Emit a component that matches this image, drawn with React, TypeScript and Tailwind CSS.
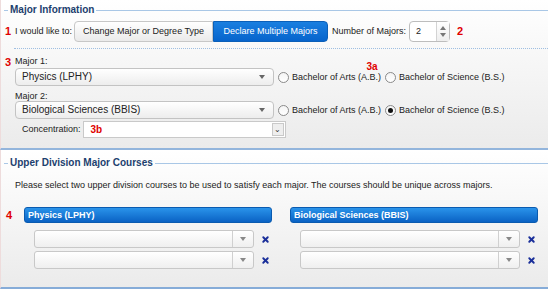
import { X } from "lucide-react";

const red = "text-[#e00000] font-bold text-[11px] leading-none";

function Legend({ title }: { title: string }) {
  return (
    <div className="flex items-center h-[14px]">
      <div className="ml-[3px] w-[4px] h-px bg-[#a9c7e6]" />
      <span className="px-[2px] font-bold text-[10px] text-[#1c3f6e] leading-none">{title}</span>
      <div className="flex-1 h-px bg-[#a9c7e6]" />
    </div>
  );
}

function Caret({ color = "border-t-[#666]" }: { color?: string }) {
  return <span className={`w-0 h-0 border-l-[3px] border-r-[3px] border-t-[4px] border-l-transparent border-r-transparent ${color}`} />;
}

function Select({ value, width }: { value: string; width: string }) {
  return (
    <div className={`${width} h-[18px] rounded-[4px] border border-[#c3c3c3] bg-gradient-to-b from-white to-[#ededed] flex items-center pl-[6px] pr-[8px]`}>
      <span className="flex-1 text-[10px] text-[#222]">{value}</span>
      <Caret />
    </div>
  );
}

function Radio({ label, checked }: { label: string; checked?: boolean }) {
  return (
    <div className="flex items-center">
      <span className="w-[11px] h-[11px] rounded-full border border-[#8a8a8a] bg-gradient-to-b from-[#f4f4f4] to-white flex items-center justify-center">
        {checked && <span className="w-[5px] h-[5px] rounded-full bg-[#111]" />}
      </span>
      <span className="ml-[3px]">{label}</span>
    </div>
  );
}

function Combo() {
  return (
    <div className="flex items-center">
      <div className="w-[220px] h-[18px] rounded-[3px] border border-[#c8c8c8] bg-gradient-to-b from-white to-[#efefef] flex">
        <div className="flex-1" />
        <div className="w-[21px] border-l border-[#d0d0d0] flex items-center justify-center">
          <Caret color="border-t-[#888]" />
        </div>
      </div>
      <X className="ml-[7px] w-[9px] h-[9px] text-[#1a2f9a]" strokeWidth={5} />
    </div>
  );
}

function Column({ title }: { title: string }) {
  return (
    <div className="w-[248px]">
      <div className="h-[16px] rounded-[3px] border border-[#0a5bb0] bg-gradient-to-b from-[#2a93ea] to-[#0a62c4] text-white font-bold text-[9px] flex items-center pl-[3px]">
        {title}
      </div>
      <div className="ml-[10px] mt-[7px] flex flex-col gap-[3px]">
        <Combo />
        <Combo />
      </div>
    </div>
  );
}

export default function App() {
  return (
    <div className="w-[548px] h-[289px] overflow-hidden bg-white font-['Liberation_Sans',Arial,sans-serif] text-[9px] text-[#222] leading-none">
      {/* Major Information */}
      <section className="h-[150px] pt-[3px] border-b-2 border-[#93b5dc] border-l border-l-[#eedcdc] bg-gradient-to-b from-white to-[#ebebeb]">
        <Legend title="Major Information" />
        <div className="mt-[4px] flex items-center h-[21px]">
          <span className={`w-[14px] pl-[4px] ${red}`}>1</span>
          <span>I would like to:</span>
          <div className="ml-[2px] flex">
            <button className="w-[139px] h-[21px] rounded-l-[4px] border border-[#c7c7c7] bg-gradient-to-b from-white to-[#eaeaea] text-[9px] text-[#222]">
              Change Major or Degree Type
            </button>
            <button className="w-[115px] h-[21px] rounded-r-[4px] border border-[#0b5fb8] bg-gradient-to-b from-[#1a7fe0] to-[#0664cc] text-[9px] text-white">
              Declare Multiple Majors
            </button>
          </div>
          <span className="ml-[4px]">Number of Majors:</span>
          <div className="ml-[3px] w-[41px] h-[21px] rounded-[4px] border border-[#bdbdbd] bg-white flex">
            <span className="flex-1 pl-[6px] flex items-center text-[9px]">2</span>
            <div className="w-[13px] border-l border-[#d3d3d3] bg-gradient-to-b from-white to-[#eee] flex flex-col items-center justify-around py-[2px]">
              <span className="w-0 h-0 border-l-[3px] border-r-[3px] border-b-[4px] border-l-transparent border-r-transparent border-b-[#777]" />
              <span className="w-0 h-0 border-l-[3px] border-r-[3px] border-t-[4px] border-l-transparent border-r-transparent border-t-[#777]" />
            </div>
          </div>
          <span className={`ml-[7px] ${red}`}>2</span>
        </div>
        <div className="mt-[6px] ml-[13px] border-t border-dotted border-[#9fbfe2]" />

        <div className="mt-[8px] h-[9px] flex items-start">
          <span className={`w-[14px] pl-[4px] ${red}`}>3</span>
          <span>Major 1:</span>
          <span className="ml-[319px] relative top-[5px] text-[#e00000] font-bold text-[10px]">3a</span>
        </div>
        <div className="mt-[2px] ml-[14px] flex items-center">
          <Select value="Physics (LPHY)" width="w-[259px]" />
          <div className="ml-[4px]"><Radio label="Bachelor of Arts (A.B.)" /></div>
          <div className="ml-[4px]"><Radio label="Bachelor of Science (B.S.)" /></div>
        </div>
        <div className="mt-[6px] ml-[14px] h-[9px]">Major 2:</div>
        <div className="ml-[14px] flex items-center">
          <Select value="Biological Sciences (BBIS)" width="w-[259px]" />
          <div className="ml-[4px]"><Radio label="Bachelor of Arts (A.B.)" /></div>
          <div className="ml-[4px]"><Radio checked label="Bachelor of Science (B.S.)" /></div>
        </div>
        <div className="mt-[2px] ml-[21px] flex items-center">
          <span>Concentration:</span>
          <div className="ml-[2px] w-[203px] h-[17px] border border-[#c9c9c9] bg-white flex items-center">
            <span className="flex-1 pl-[7px] text-[#e00000] font-bold text-[10px]">3b</span>
            <div className="w-[12px] h-[13px] mr-[1px] border border-[#c9c9c9] bg-[#eee] flex items-center justify-center text-[8px] text-[#333]">⌄</div>
          </div>
        </div>
      </section>

      {/* Upper Division Major Courses */}
      <section className="h-[139px] pt-[6px] border-b-2 border-[#86acd8] border-l border-l-[#eedcdc] bg-gradient-to-b from-white to-[#ebebeb]">
        <Legend title="Upper Division Major Courses" />
        <p className="mt-[11px] ml-[14px]">
          Please select two upper division courses to be used to satisfy each major. The courses should be unique across majors.
        </p>
        <div className="mt-[17px] flex">
          <span className={`w-[23px] pl-[5px] pt-[3px] ${red}`}>4</span>
          <Column title="Physics (LPHY)" />
          <div className="w-[18px]" />
          <Column title="Biological Sciences (BBIS)" />
        </div>
      </section>
    </div>
  );
}
